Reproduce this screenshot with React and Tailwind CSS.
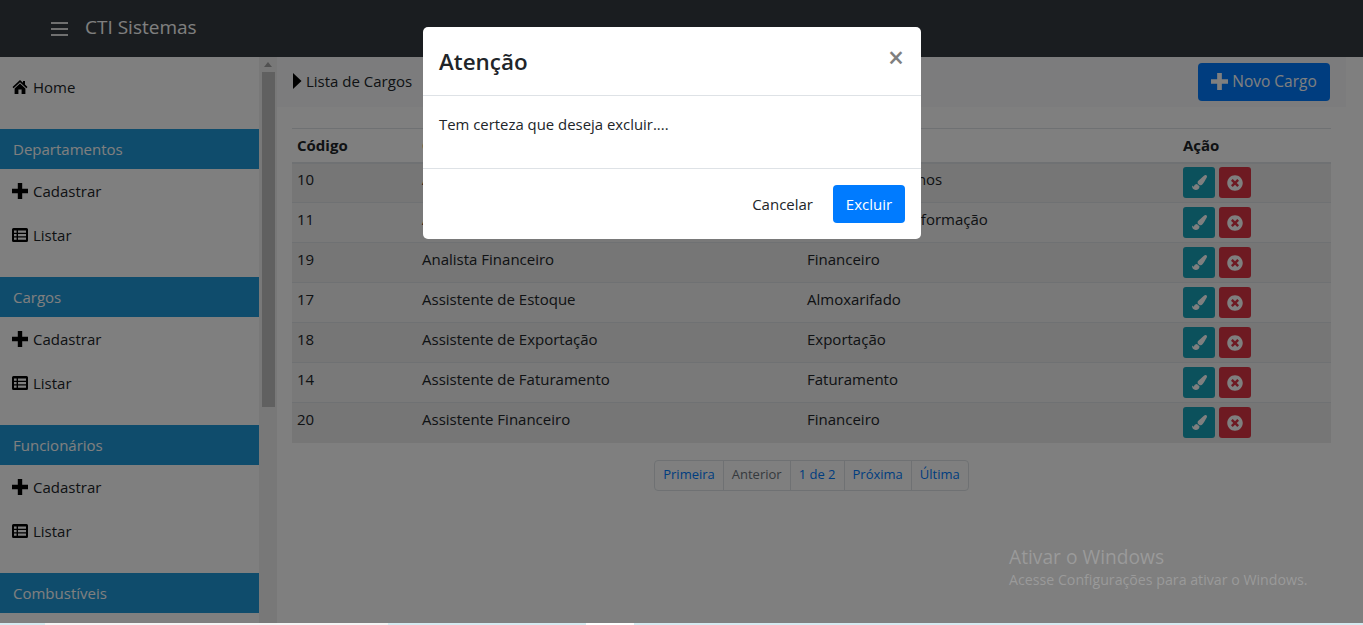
import { FaPaintBrush, FaTimesCircle } from 'react-icons/fa';

const font = { fontFamily: '"Open Sans", sans-serif' };

const sections = ['Departamentos', 'Cargos', 'Funcionários'];

const rows = [
  ['10', 'Analista de RH', 'Recursos Humanos'],
  ['11', 'Analista de Sistemas', 'Tecnologia da Informação'],
  ['19', 'Analista Financeiro', 'Financeiro'],
  ['17', 'Assistente de Estoque', 'Almoxarifado'],
  ['18', 'Assistente de Exportação', 'Exportação'],
  ['14', 'Assistente de Faturamento', 'Faturamento'],
  ['20', 'Assistente Financeiro', 'Financeiro'],
];

const pages = ['Primeira', 'Anterior', '1 de 2', 'Próxima', 'Última'];

function HomeIcon() {
  return (
    <svg viewBox="0 0 16 16" className="h-[16px] w-[16px]" fill="currentColor">
      <path d="M8 1 0.5 8 1.6 9.2 8 3.2 14.4 9.2 15.5 8 13 5.6V2H11V3.8Z" />
      <path d="M8 4.6 2.6 9.6V15H6.4V10.6H9.6V15H13.4V9.6Z" />
    </svg>
  );
}

function PlusIcon({ className }) {
  return (
    <svg viewBox="0 0 16 16" className={className} fill="currentColor">
      <path d="M5.8 0H10.2V5.8H16V10.2H10.2V16H5.8V10.2H0V5.8H5.8Z" />
    </svg>
  );
}

function ListIcon() {
  return (
    <svg viewBox="0 0 16 14" className="h-[14px] w-[16px]" fill="currentColor">
      <path
        fillRule="evenodd"
        d="M1.5 0H14.5A1.5 1.5 0 0 1 16 1.5V12.5A1.5 1.5 0 0 1 14.5 14H1.5A1.5 1.5 0 0 1 0 12.5V1.5A1.5 1.5 0 0 1 1.5 0ZM2 2.5V4.7H4.6V2.5ZM6 2.5V4.7H14V2.5ZM2 6V8.2H4.6V6ZM6 6V8.2H14V6ZM2 9.5V11.7H4.6V9.5ZM6 9.5V11.7H14V9.5Z"
      />
    </svg>
  );
}

function SideLink({ icon, label }) {
  return (
    <a className="flex h-[44px] items-center gap-[5px] pl-[12px] text-[#212529]">
      <span className="flex w-[16px] justify-center text-black">{icon}</span>
      {label}
    </a>
  );
}

function Sidebar() {
  return (
    <aside className="flex w-[277px] shrink-0 overflow-hidden bg-white">
      <nav className="w-[259px] pt-[8px]">
        <SideLink icon={<HomeIcon />} label="Home" />
        {sections.map((name) => (
          <div key={name} className="mt-[20px]">
            <div className="flex h-[40px] items-center bg-[#1f99d8] pl-[13px] text-white">{name}</div>
            <SideLink icon={<PlusIcon className="h-[16px] w-[16px]" />} label="Cadastrar" />
            <SideLink icon={<ListIcon />} label="Listar" />
          </div>
        ))}
        <div className="mt-[20px] flex h-[40px] items-center bg-[#1f99d8] pl-[13px] text-white">Combustíveis</div>
      </nav>
      <div className="flex w-[18px] flex-col items-center bg-[#f1f1f1]">
        <div className="mt-[5px] h-0 w-0 border-x-[4px] border-b-[5px] border-x-transparent border-b-[#a3a3a3]" />
        <div className="mt-[5px] h-[335px] w-[13px] bg-[#c1c1c1]" />
      </div>
    </aside>
  );
}

function Main() {
  return (
    <main className="w-[1069px] shrink-0 bg-white">
      <div className="flex h-[50px] items-center justify-between bg-[#f8f9fa] pl-[16px] pr-[16px]">
        <div className="mb-[2px] flex items-center gap-[4px] text-[#212529]">
          <svg viewBox="0 0 9 16" className="h-[16px] w-[9px] text-black" fill="currentColor">
            <path d="M0 0 8.5 8 0 16Z" />
          </svg>
          <span>Lista de Cargos</span>
        </div>
        <button className="flex h-[38px] w-[132px] items-center justify-center gap-[4px] rounded-[4px] bg-[#007bff] pb-[1px] text-[15.5px] text-white">
          <PlusIcon className="h-[17px] w-[17px]" />
          Novo Cargo
        </button>
      </div>
      <table className="ml-[15px] mt-[21px] w-[1039px] table-fixed border-collapse leading-[22px] text-[#212529]">
        <colgroup>
          <col className="w-[125px]" />
          <col className="w-[385px]" />
          <col className="w-[376px]" />
          <col className="w-[153px]" />
        </colgroup>
        <thead>
          <tr className="h-[34px] border-y border-b-2 border-[#dee2e6] text-left font-bold">
            <th className="px-[5px]">Código</th>
            <th className="px-[5px]">Cargo</th>
            <th className="px-[5px]">Departamento</th>
            <th className="px-[5px]">Ação</th>
          </tr>
        </thead>
        <tbody>
          {rows.map((row, i) => (
            <tr key={row[0]} className={`h-[40px] border-t border-[#dee2e6] ${i % 2 === 0 ? 'bg-[#ececec]' : 'bg-[#f2f2f2]'}`}>
              <td className="px-[5px] pb-[8px]">{row[0]}</td>
              <td className="px-[5px] pb-[8px]">{row[1]}</td>
              <td className="px-[5px] pb-[8px]">{row[2]}</td>
              <td className="px-[5px]">
                <div className="flex gap-[4px]">
                  <button className="flex h-[31px] w-[32px] items-center justify-center rounded-[3px] bg-[#17a2b8] text-[15px] text-white">
                    <FaPaintBrush />
                  </button>
                  <button className="flex h-[31px] w-[32px] items-center justify-center rounded-[3px] bg-[#dc3545] text-[16px] text-white">
                    <FaTimesCircle />
                  </button>
                </div>
              </td>
            </tr>
          ))}
        </tbody>
      </table>
      <div className="mt-[17px] flex justify-center">
        <ul className="flex h-[31px] overflow-hidden rounded-[4px] border border-[#dee2e6] text-[13px]">
          {pages.map((p) => (
            <li
              key={p}
              className={`flex items-center border-r border-[#dee2e6] px-[8px] last:border-r-0 ${p === 'Anterior' ? 'text-[#6c757d]' : 'text-[#007bff]'}`}
            >
              {p}
            </li>
          ))}
        </ul>
      </div>
    </main>
  );
}

function Modal() {
  return (
    <div className="absolute left-[423px] top-[27px] flex h-[212px] w-[498px] flex-col rounded-[5px] bg-white text-[#212529]">
      <div className="flex h-[69px] items-center justify-between border-b border-[#dee2e6] px-[16px]">
        <h5 className="pt-[2px] text-[22.4px] font-semibold">Atenção</h5>
        <span className="mb-[8px] mr-[1px] text-[28px] font-semibold leading-none text-[#7f7f7f]">×</span>
      </div>
      <div className="h-[73px] border-b border-[#dee2e6] px-[16px] pt-[16px] text-[14.9px] leading-[24px]">Tem certeza que deseja excluir....</div>
      <div className="flex flex-1 items-center justify-end gap-[20px] pr-[16px]">
        <span>Cancelar</span>
        <button className="h-[38px] w-[72px] rounded-[4px] bg-[#007bff] font-medium text-white">Excluir</button>
      </div>
    </div>
  );
}

export default function App() {
  return (
    <div style={font} className="relative flex h-[625px] w-[1363px] flex-col overflow-hidden bg-white text-[15px]">
      <header className="flex h-[57px] shrink-0 items-center bg-[#343a40] pl-[51px] text-white">
        <div className="flex w-[17px] flex-col gap-[4px]">
          <span className="h-[2px] bg-[#e0e0e0]" />
          <span className="h-[2px] bg-[#e0e0e0]" />
          <span className="h-[2px] bg-[#e0e0e0]" />
        </div>
        <span className="mb-[3px] ml-[17px] text-[19px]">CTI Sistemas</span>
      </header>
      <div className="flex min-h-0 flex-1">
        <Sidebar />
        <Main />
      </div>
      <div className="absolute inset-x-0 bottom-[2px] top-0 bg-black/50" />
      <Modal />
      <div className="absolute left-[1009px] top-[544px] text-[#9a9a9a]">
        <p className="text-[19.2px] leading-[26px]">Ativar o Windows</p>
        <p className="text-[14.2px] leading-[20px]">Acesse Configurações para ativar o Windows.</p>
      </div>
      <div className="flex h-[2px] shrink-0 bg-[#d5eaf0]">
        <span className="ml-[45px] w-[343px] bg-[#f4f4f4]" />
        <span className="ml-[198px] w-[48px] bg-white" />
      </div>
    </div>
  );
}
